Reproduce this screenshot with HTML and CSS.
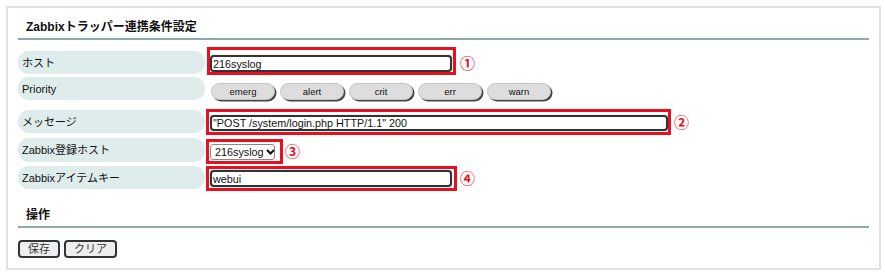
FILE: index.html
```html
<!DOCTYPE html>
<html lang="ja">
<head>
<meta charset="utf-8">
<title>Zabbixトラッパー連携条件設定</title>
<link rel="stylesheet" href="styles.css">
</head>
<body>
<div class="panel">
  <h2 class="heading">Zabbixトラッパー連携条件設定</h2>
  <div class="form">
    <div class="row row-host">
      <div class="label">ホスト</div>
      <div class="value">
        <span class="field"><input class="text text-short" type="text" value="216syslog"><span class="mark mark-host"></span></span>
        <span class="num num-host">①</span>
      </div>
    </div>
    <div class="row row-priority">
      <div class="label">Priority</div>
      <div class="value buttons">
        <span class="pbtn">emerg</span>
        <span class="pbtn">alert</span>
        <span class="pbtn">crit</span>
        <span class="pbtn">err</span>
        <span class="pbtn">warn</span>
      </div>
    </div>
    <div class="row row-message">
      <div class="label">メッセージ</div>
      <div class="value">
        <span class="field"><input class="text text-long" type="text" value="&quot;POST /system/login.php HTTP/1.1&quot; 200"><span class="mark mark-message"></span></span>
        <span class="num num-message">②</span>
      </div>
    </div>
    <div class="row row-select">
      <div class="label label-tall">Zabbix登録ホスト</div>
      <div class="value">
        <span class="field"><span class="select">216syslog<svg class="chev" width="9" height="6" viewBox="0 0 9 6"><polyline points="1,1 4.5,4.5 8,1" fill="none" stroke="#111" stroke-width="2"/></svg></span><span class="mark mark-select"></span></span>
        <span class="num num-select">③</span>
      </div>
    </div>
    <div class="row row-key">
      <div class="label">Zabbixアイテムキー</div>
      <div class="value">
        <span class="field"><input class="text text-short" type="text" value="webui"><span class="mark mark-key"></span></span>
        <span class="num num-key">④</span>
      </div>
    </div>
  </div>
  <h2 class="heading heading-ops">操作</h2>
  <div class="actions">
    <button class="btn btn-save" type="button">保存</button>
    <button class="btn btn-clear" type="button">クリア</button>
  </div>
</div>
</body>
</html>
```
FILE: styles.css
```css
html, body {
  margin: 0;
  padding: 0;
  background: #ffffff;
}
body {
  font-family: "Liberation Sans", "Noto Sans CJK JP", sans-serif;
  color: #222;
}
.panel {
  box-sizing: border-box;
  margin: 6px 0 0 6px;
  width: 875px;
  height: 264px;
  border: 2px solid #e2e2e2;
  padding: 0 10px;
}
.heading {
  margin: 0;
  padding: 8px 0 0 8px;
  font-size: 12px;
  font-weight: bold;
  line-height: 22px;
  color: #111;
  border-bottom: 2px solid #88adaa;
}
.heading-ops {
  margin-top: 12px;
  padding-top: 0;
}
.form {
  margin-top: 11px;
}
.row {
  display: flex;
  align-items: flex-start;
  gap: 5px;
}
.row-host { height: 26px; }
.row-priority { height: 33px; }
.row-message { height: 28px; }
.row-select { height: 28px; }
.row-key { height: 26px; }
.label {
  box-sizing: border-box;
  width: 187px;
  height: 23px;
  flex: none;
  border-radius: 11px;
  background: #deeceb;
  padding: 1px 0 0 4px;
  font-size: 11px;
  line-height: 22px;
  color: #111;
  white-space: nowrap;
}
.label-tall {
  height: 24px;
  line-height: 23px;
}
.value {
  display: flex;
  align-items: center;
}
.row-host .value { padding-top: 4px; }
.row-message .value { padding-top: 5px; }
.row-select .value { padding-top: 6px; }
.row-key .value { padding-top: 4px; }
.field {
  position: relative;
  display: inline-flex;
}
.text {
  box-sizing: border-box;
  height: 17px;
  margin: 0;
  padding: 0 0 0 1px;
  border: 2px solid #333;
  border-radius: 4px;
  box-shadow: 0 0 1px #888;
  background: #fff;
  font-family: "Liberation Sans", "Noto Sans CJK JP", sans-serif;
  font-size: 10.8px;
  color: #111;
  outline: none;
}
.text-short { width: 242px; }
.text-long { width: 458px; height: 16px; }
.select {
  box-sizing: border-box;
  display: inline-flex;
  align-items: center;
  height: 16px;
  width: 65px;
  padding: 0 0 0 4px;
  border: 1px solid #8a8a8a;
  border-radius: 3px;
  background: #fff;
  font-size: 10.8px;
  color: #111;
  white-space: nowrap;
}
.chev {
  margin-left: 2px;
  flex: none;
}
.mark {
  position: absolute;
  border: 3px solid #ea0f1e;
  pointer-events: none;
}
.mark-host { left: -3px; right: -4px; top: -8px; bottom: -3px; }
.mark-message { left: -4px; right: -3px; top: -6px; bottom: -4px; }
.mark-select { left: -4px; right: -8px; top: -5px; bottom: -4px; }
.mark-key { left: -4px; right: -5px; top: -4px; bottom: -4px; }
.num {
  font-family: "Noto Sans CJK JP", sans-serif;
  font-size: 15px;
  font-weight: bold;
  line-height: 15px;
  color: #ea0f1e;
  margin-top: -3px;
}
.num-host { margin-left: 8px; }
.num-message { margin-left: 6px; }
.num-select { margin-left: 10px; }
.num-key { margin-left: 8px; }
.buttons {
  padding-top: 6px;
  padding-left: 1px;
  gap: 5px;
}
.pbtn {
  box-sizing: border-box;
  width: 64px;
  height: 17px;
  border: 1px solid #c4c4c4;
  border-radius: 9px;
  background: #dddddd;
  box-shadow: 1.5px 1.5px 0 #444;
  font-size: 9.5px;
  line-height: 15px;
  text-align: center;
  color: #111;
}
.actions {
  display: flex;
  gap: 4px;
  margin-top: 12px;
}
.btn {
  box-sizing: border-box;
  height: 18px;
  margin: 0;
  padding: 0;
  border: 2px solid #333;
  border-radius: 4px;
  background: #eeeeee;
  font-family: "Liberation Sans", "Noto Sans CJK JP", sans-serif;
  font-size: 11px;
  line-height: 14px;
  color: #333;
}
.btn-save { width: 42px; }
.btn-clear { width: 53px; }
```
